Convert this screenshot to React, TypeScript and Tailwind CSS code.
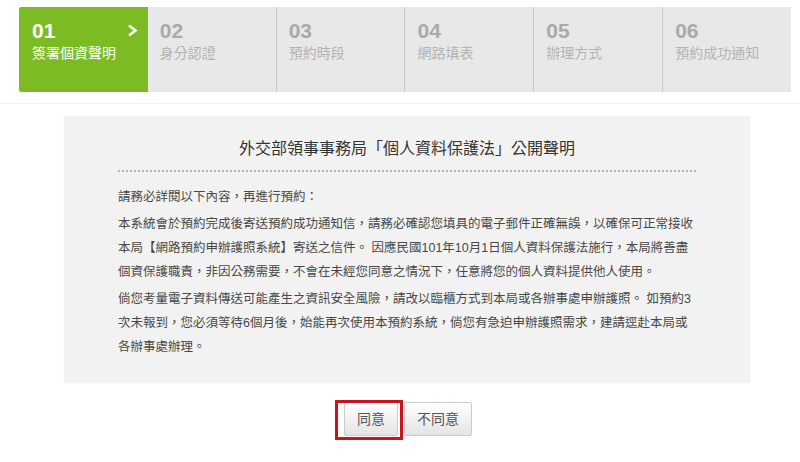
import React from "react";

const steps = [
  { n: "01", label: "簽署個資聲明" },
  { n: "02", label: "身分認證" },
  { n: "03", label: "預約時段" },
  { n: "04", label: "網路填表" },
  { n: "05", label: "辦理方式" },
  { n: "06", label: "預約成功通知" },
];

const font = { fontFamily: '"Liberation Sans", "Noto Sans CJK TC", sans-serif' };

export default function App() {
  return (
    <div className="w-[800px] h-[462px] bg-white overflow-hidden" style={font}>
      <div className="pt-[7px] pl-[19px]">
        <div className="flex w-[772px] h-[85px]">
          {steps.map((s, i) => (
            <div
              key={s.n}
              className={
                i === 0
                  ? "relative flex-1 bg-[#7dbb24] pl-[13px] pt-[12px] rounded-l-[2px]"
                  : i === 1
                  ? "relative flex-1 bg-[#e8e8e8] pl-[12px] pt-[12px]"
                  : "relative flex-1 bg-[#e8e8e8] pl-[12px] pt-[12px] border-l border-[#c9c9c9]"
              }
            >
              <div
                className={
                  i === 0
                    ? "text-[21px] leading-[24px] font-bold text-white"
                    : "text-[21px] leading-[24px] font-bold text-[#aaaaaa]"
                }
              >
                {s.n}
              </div>
              <div
                className={
                  i === 0
                    ? "text-[14px] leading-[20px] text-white"
                    : "text-[14px] leading-[20px] text-[#b3b3b3]"
                }
              >
                {s.label}
              </div>
              {i === 0 && (
                <svg
                  className="absolute left-[108px] top-[17px]"
                  width="11"
                  height="13"
                  viewBox="0 0 11 13"
                >
                  <path d="M2 1.5 L8.5 6.5 L2 11.5" fill="none" stroke="#ffffff" strokeWidth="2.6" strokeLinejoin="miter" />
                </svg>
              )}
            </div>
          ))}
        </div>
      </div>
      <div className="mt-[11px] h-px bg-[#f3f3f3]" />
      <div className="mt-[12px] ml-[64px] w-[686px] h-[266px] bg-[#f2f2f2] shadow-[0_1px_2px_rgba(0,0,0,0.06)] px-[54px] pt-[21px]">
        <h1 className="text-center text-[16px] leading-[24px] text-[#333333]">
          外交部領事事務局「個人資料保護法」公開聲明
        </h1>
        <div className="mt-[9px] border-t-2 border-dotted border-[#b4b4b4]" />
        <div className="mt-[13px] text-[12.5px] leading-[24px] text-[#484848] whitespace-nowrap">
          <p className="mb-[3px]">請務必詳閱以下內容，再進行預約：</p>
          <p className="mb-[3px]">
            本系統會於預約完成後寄送預約成功通知信，請務必確認您填具的電子郵件正確無誤，以確保可正常接收
            <br />
            本局【網路預約申辦護照系統】寄送之信件。 因應民國101年10月1日個人資料保護法施行，本局將善盡
            <br />
            個資保護職責，非因公務需要，不會在未經您同意之情況下，任意將您的個人資料提供他人使用。
          </p>
          <p>
            倘您考量電子資料傳送可能產生之資訊安全風險，請改以臨櫃方式到本局或各辦事處申辦護照。 如預約3
            <br />
            次未報到，您必須等待6個月後，始能再次使用本預約系統，倘您有急迫申辦護照需求，建請逕赴本局或
            <br />
            各辦事處辦理。
          </p>
        </div>
      </div>
      <div className="mt-[20px] flex justify-center gap-[6px] pl-[16px]">
        <div className="relative">
          <button className="h-[34px] px-[12px] text-[14px] text-[#555555] border border-[#cccccc] rounded-[2px] bg-gradient-to-b from-white to-[#e4e4e4]">
            同意
          </button>
          <div className="absolute left-[-9px] top-[-2px] right-[-5px] bottom-[-4px] border-[3px] border-[#c8141c] pointer-events-none" />
        </div>
        <button className="h-[34px] px-[12px] text-[14px] text-[#555555] border border-[#cccccc] rounded-[2px] bg-gradient-to-b from-white to-[#e4e4e4]">
          不同意
        </button>
      </div>
    </div>
  );
}
